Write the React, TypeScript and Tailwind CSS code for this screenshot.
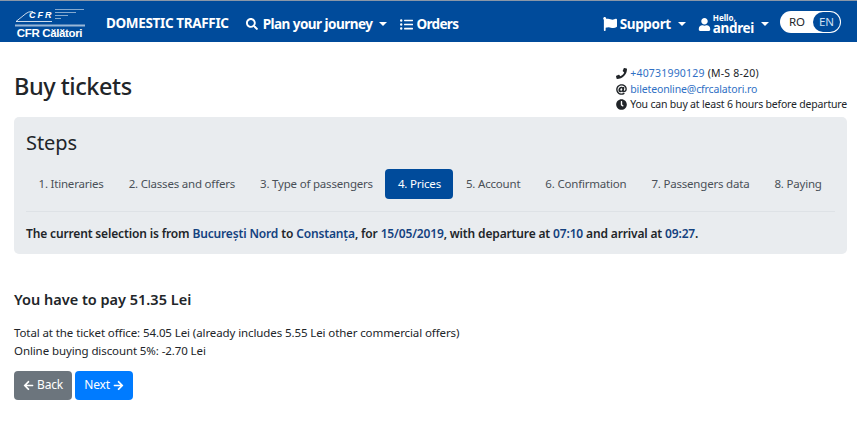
import { FaSearch, FaListUl, FaFlag, FaUser, FaPhone, FaAt, FaClock, FaArrowLeft, FaArrowRight } from 'react-icons/fa';

const steps = ['1. Itineraries', '2. Classes and offers', '3. Type of passengers', '4. Prices', '5. Account', '6. Confirmation', '7. Passengers data', '8. Paying'];

function Caret() {
  return <span className="ml-[7px] h-0 w-0 border-x-[4px] border-t-[4px] border-x-transparent border-t-white" />;
}

function Logo() {
  return (
    <div className="relative flex w-[71px] -translate-y-[1.5px] flex-col items-center text-white">
      <svg viewBox="0 0 71 15" className="h-[15px] w-[71px]" fill="none" stroke="white">
        <path d="M2 14 L12 6 Q14 4 19 4 M2 14 H38" strokeWidth="0.8" />
        <path d="M41 2 H70 M41 5 H62 M41 8 H54 M41 11 H47" strokeWidth="0.7" opacity="0.75" />
      </svg>
      <span className="absolute top-[3px] left-[15px] font-['Liberation_Sans',sans-serif] text-[9px] leading-none font-bold tracking-[2px] italic">CFR</span>
      <div className="mt-[2px] h-[2px] w-[70px] bg-white/60" />
      <span className="font-['Liberation_Sans',sans-serif] text-[11.5px] leading-[12px] font-bold whitespace-nowrap">CFR Călători</span>
    </div>
  );
}

export default function App() {
  return (
    <div className="min-h-[433px] bg-white font-['Noto_Sans',sans-serif] text-[12px] text-[#212529]">
      <nav className="flex h-[42px] items-center border-t border-[#8a97a8] bg-[#004b9b] pt-[5px] pr-[16px] pl-[14px] text-[13.5px] font-bold tracking-[-0.35px] text-white">
        <Logo />
        <span className="ml-[21px] -translate-y-px">DOMESTIC TRAFFIC</span>
        <span className="ml-[17px] flex items-center tracking-[-0.53px]">
          <FaSearch className="mr-[5px] text-[12px]" />Plan your journey<Caret />
        </span>
        <span className="ml-[13px] flex items-center tracking-[-0.65px]">
          <FaListUl className="mr-[3px] text-[13px]" />Orders
        </span>
        <span className="ml-auto flex items-center">
          <FaFlag className="mr-[3px] text-[14px]" />Support<Caret />
        </span>
        <span className="ml-[12px] flex items-center">
          <FaUser className="mr-[2px] text-[13px]" />
          <span className="flex flex-col">
            <span className="text-[8px] leading-[8px] tracking-normal">Hello,</span>
            <span className="leading-[13px]">andrei</span>
          </span>
          <Caret />
        </span>
        <div className="ml-[11px] flex h-[22px] w-[61px] -translate-y-[2px] items-center rounded-full bg-white p-[1px] text-[11.5px] font-normal tracking-normal text-[#212529]">
          <span className="flex-1 text-center">RO</span>
          <span className="flex h-[20px] w-[27px] items-center justify-center rounded-full bg-[#004b9b] text-[#cfe0f2]">EN</span>
        </div>
      </nav>

      <header className="flex items-start justify-between pt-[24px] pr-[10px] pl-[14px]">
        <h1 className="pt-[4px] text-[23.5px] leading-[32px] font-medium tracking-[-0.45px]">Buy tickets</h1>
        <div className="text-[10.5px] leading-[15.5px] whitespace-nowrap">
          <div className="flex items-center tracking-[0.2px]"><FaPhone className="mr-[3px] text-[11px]" /><span className="text-[#2f6fc4]">+40731990129</span>&nbsp;(M-S 8-20)</div>
          <div className="flex items-center tracking-[-0.13px]"><FaAt className="mr-[3px] text-[11px]" /><span className="text-[#2f6fc4]">bileteonline@cfrcalatori.ro</span></div>
          <div className="flex items-center tracking-[-0.19px]"><FaClock className="mr-[3px] text-[11px]" />You can buy at least 6 hours before departure</div>
        </div>
      </header>

      <section className="mt-[4px] mr-[10px] ml-[14px] h-[137px] rounded-[5px] bg-[#e9ecef] px-[12px] pt-[11px]">
        <h2 className="text-[20px] leading-[30px] font-normal tracking-[-0.1px]">Steps</h2>
        <ul className="mt-[11px] flex h-[30px] items-center">
          {steps.map((step, i) => (
            <li
              key={step}
              className={`flex h-[30px] items-center rounded-[4px] px-[12.5px] text-[11.5px] tracking-[-0.2px] whitespace-nowrap ${i === 3 ? 'bg-[#004b9b] text-white' : 'text-[#495057]'}`}
            >
              {step}
            </li>
          ))}
        </ul>
        <div className="mt-[12px] border-t border-[#dee2e6] pt-[13px] text-[12px] leading-[18px] font-semibold tracking-[-0.15px] whitespace-nowrap">
          The current selection is from <span className="text-[#14427f]">București Nord</span> to <span className="text-[#14427f]">Constanța</span>, for <span className="text-[#14427f]">15/05/2019</span>, with departure at <span className="text-[#14427f]">07:10</span> and arrival at <span className="text-[#14427f]">09:27</span>.
        </div>
      </section>

      <main className="px-[14px] pt-[35px]">
        <h3 className="text-[14.5px] leading-[20px] font-semibold">You have to pay 51.35 Lei</h3>
        <p className="mt-[15px] text-[11.5px] leading-[18px] tracking-[-0.1px]">Total at the ticket office: 54.05 Lei (already includes 5.55 Lei other commercial offers)</p>
        <p className="text-[11.5px] leading-[18px] tracking-[-0.1px]">Online buying discount 5%: -2.70 Lei</p>
        <div className="mt-[11px] flex gap-[3px]">
          <button className="flex h-[29px] w-[58px] items-center justify-center gap-[3px] rounded-[4px] bg-[#6c757d] text-[12px] tracking-[-0.2px] text-white">
            <FaArrowLeft className="text-[11px]" />Back
          </button>
          <button className="flex h-[29px] w-[58px] items-center justify-center gap-[3px] rounded-[4px] bg-[#007bff] text-[12px] tracking-[-0.2px] text-white">
            Next<FaArrowRight className="text-[11px]" />
          </button>
        </div>
      </main>
    </div>
  );
}
